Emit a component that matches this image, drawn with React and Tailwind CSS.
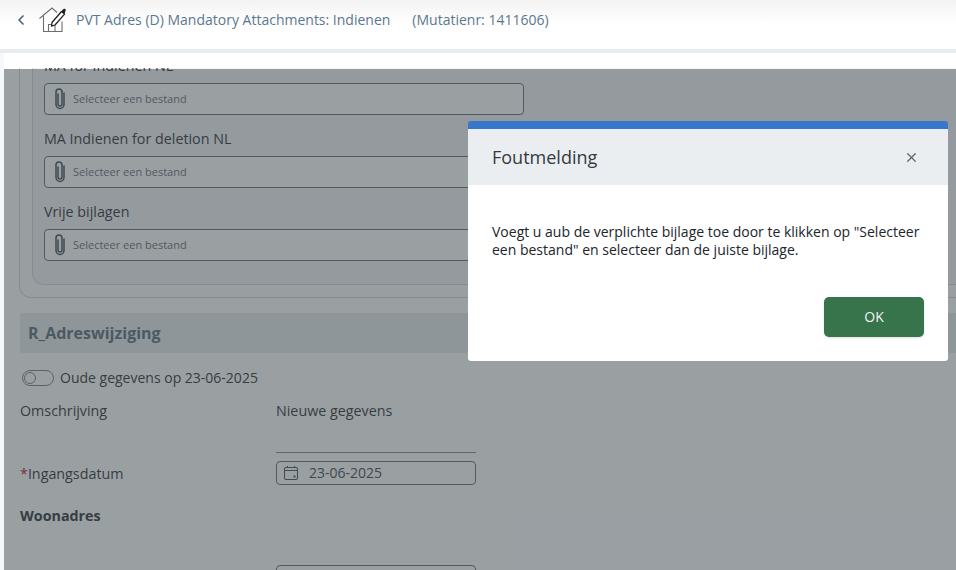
import React from 'react'
import { ChevronLeft, X } from 'lucide-react'

const font = { fontFamily: '"Open Sans", "Noto Sans", sans-serif' }

function HouseEdit() {
  return (
    <svg width="28" height="28" viewBox="0 0 28 28" fill="none" className="shrink-0">
      <path d="M0.500 12.500 13 2l5 4.500" stroke="#6e6e6e" strokeWidth="1.100" />
      <path d="M4.500 10v15.500h18.500V15.500" stroke="#6e6e6e" strokeWidth="1.100" />
      <path d="M9.500 25.500v-7h6.500v7" stroke="#6e6e6e" strokeWidth="1.100" />
      <path d="M13 16.500 22.500 5.500l3 2.600-9.500 10.900-3.500 1.200z" fill="#fff" stroke="#222" strokeWidth="1.300" strokeLinejoin="round" />
      <path d="M22.500 5.500 24 3.300c.7-.8 1.600-.9 2.300-.2.600.6.600 1.500 0 2.200l-.8 2.800z" fill="#222" />
    </svg>
  )
}

function Clip() {
  return (
    <svg width="12" height="22" viewBox="0 0 12 22" fill="none" className="shrink-0">
      <path
        d="M4 6v10a2 2 0 0 0 4 0V4a3 3 0 0 0-6 0v12.500a4 4 0 0 0 8 0V5"
        stroke="#46535c"
        strokeWidth="1.500"
        strokeLinecap="round"
      />
    </svg>
  )
}

function FileField({ label, first }) {
  return (
    <div className={first ? '' : 'mt-[14px]'}>
      <div className="h-[20px] mb-[7px] text-[14.3px] leading-[20px] text-[#343a40]">{label}</div>
      <div className="flex items-center gap-[7px] h-[32px] w-[480px] rounded-[4px] border border-[#6c757d] bg-white pl-[9px]">
        <Clip />
        <span className="text-[11px] text-[#6c757d]">Selecteer een bestand</span>
      </div>
    </div>
  )
}

function CalendarIcon() {
  return (
    <svg width="16" height="16" viewBox="0 0 16 16" fill="none" className="shrink-0">
      <rect x="1.500" y="2.500" width="13" height="12" rx="1.500" stroke="#4f5b63" strokeWidth="1.100" />
      <path d="M1.500 5.500h13M4.500 1v2M11.500 1v2" stroke="#4f5b63" strokeWidth="1.100" />
      <rect x="10.500" y="10.500" width="2" height="2" fill="#4f5b63" />
    </svg>
  )
}

export default function App() {
  return (
    <div className="relative flex flex-col w-[956px] h-[570px] overflow-hidden bg-[#f6f9fb]" style={font}>
      <header className="flex items-center h-[49px] shrink-0 bg-gradient-to-b from-[#f3f3f3] via-white to-white pb-[10px]">
        <ChevronLeft size={16} strokeWidth={2.500} className="ml-[13px] text-[#4a6378]" />
        <div className="ml-[10px]">
          <HouseEdit />
        </div>
        <span className="ml-[9px] text-sm text-[#5b7890]">PVT Adres (D) Mandatory Attachments: Indienen</span>
        <span className="ml-[22px] text-sm text-[#5b7890]">(Mutatienr: 1411606)</span>
      </header>
      <div className="h-[4px] shrink-0 bg-[#e9ecef]" />

      <main className="flex flex-col flex-1 min-h-0 ml-[4px] pt-[15px] bg-white">
        <div className="flex-1 min-h-0 overflow-hidden pl-[15px]">
          <div className="-mt-[12px] w-[1100px]">
            <div className="rounded-b-[12px] border border-t-0 border-[#d5d9dd] px-[12px] pb-[12px] bg-[#fcfcfc]">
              <div className="rounded-b-[12px] border border-t-0 border-[#d5d9dd] px-[11px] pb-[23px] bg-[#f4f5f6]">
                <FileField first label="MA for Indienen NL" />
                <FileField label="MA Indienen for deletion NL" />
                <FileField label="Vrije bijlagen" />
              </div>
            </div>

            <div className="flex items-center h-[40px] mt-[15px] ml-[1px] pl-[8px] rounded-[2px] bg-[#e9ecef]">
              <span className="text-base font-bold text-[#5f7580]">R_Adreswijziging</span>
            </div>

            <div className="flex items-center mt-[15px] ml-[3px] h-[20px] text-sm text-[#343a40]">
              <span className="flex items-center w-[32px] h-[16px] rounded-full border border-[#7d858b] pl-[1px]">
                <span className="w-[12px] h-[12px] rounded-full border border-[#7d858b]" />
              </span>
              <span className="ml-[6px]">Oude gegevens op 23-06-2025</span>
            </div>

            <div className="grid grid-cols-[256px_200px] mt-[13px] text-[14.3px] text-[#343a40] ml-[1px]">
              <div className="h-[20px] leading-[20px]">Omschrijving</div>
              <div className="h-[20px] leading-[20px]">Nieuwe gegevens</div>

              <div className="col-start-2 h-[31px] border-b border-[#868e96] mt-[1px] mb-[8px]" />

              <div className="flex items-center h-[24px] pt-[1px]">
                <span className="text-[#b02a37]">*</span>Ingangsdatum
              </div>
              <div className="flex items-center gap-[10px] h-[24px] rounded-[4px] border border-[#6c757d] pl-[6px]">
                <CalendarIcon />
                <span className="text-sm text-[#495057]">23-06-2025</span>
              </div>

              <div className="col-span-2 mt-[21px] h-[20px] leading-[20px] font-bold">Woonadres</div>
              <div className="col-start-2 mt-[39px] h-[24px] rounded-[4px] border border-[#6c757d]" />
            </div>
          </div>
        </div>
      </main>

      <div className="absolute left-[4px] right-0 top-[69px] bottom-0 bg-[#353f46]/50" />

      <div className="absolute left-[468px] top-[121px] w-[480px] h-[240px] flex flex-col rounded-[3px] overflow-hidden bg-white border-t-[8px] border-[#3778cc]">
        <div className="flex items-center justify-between h-[56px] shrink-0 pl-[24px] pr-[29px] bg-[#ebeef1]">
          <span className="text-lg text-[#343a40] -mt-[1px]">Foutmelding</span>
          <X size={15} strokeWidth={2} className="text-[#5c6770]" />
        </div>
        <p className="mt-[38px] px-[24px] text-sm leading-[18px] text-[#212529]">
          Voegt u aub de verplichte bijlage toe door te klikken op "Selecteer een bestand" en selecteer dan de juiste bijlage.
        </p>
        <div className="flex justify-end mt-auto pr-[24px] pb-[24px]">
          <button className="w-[100px] h-[40px] rounded-[5px] bg-[#37734b] text-sm font-medium text-[#f2f6f3] shadow-sm">OK</button>
        </div>
      </div>
    </div>
  )
}
